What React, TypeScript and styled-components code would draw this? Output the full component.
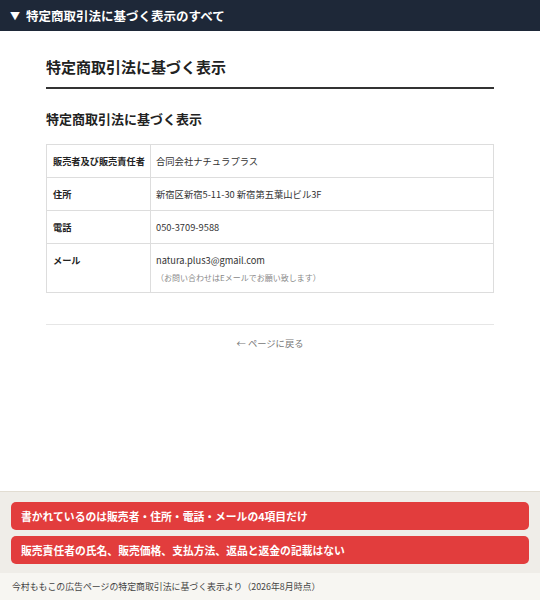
import React from "react";
import styled, { createGlobalStyle } from "styled-components";

const Global = createGlobalStyle`
  html, body { margin: 0; padding: 0; background: #ffffff; }
  body { font-family: "Noto Sans CJK JP", "Noto Sans", sans-serif; color: #222; }
  * { box-sizing: border-box; }
`;

const Page = styled.div`
  display: flex;
  flex-direction: column;
  height: 600px;
  width: 540px;
  overflow: hidden;
`;

const TopBar = styled.div`
  height: 31px;
  flex: none;
  background: #1e2838;
  color: #ffffff;
  display: flex;
  align-items: center;
  padding: 0 10px;
  font-size: 12.5px;
  font-weight: 700;
  gap: 6px;
`;

const Caret = styled.span`
  font-size: 10px;
`;

const Main = styled.div`
  flex: 1;
  background: #ffffff;
  padding: 24px 46px 0;
`;

const Title = styled.h1`
  margin: 0;
  font-size: 15px;
  font-weight: 700;
  line-height: 24px;
  padding-bottom: 8px;
  border-bottom: 2px solid #333;
`;

const SubTitle = styled.h2`
  margin: 19px 0 0;
  font-size: 13px;
  font-weight: 700;
  line-height: 22px;
`;

const Table = styled.div`
  margin-top: 14px;
  border: 1px solid #dddddd;
  display: grid;
  grid-template-columns: 104px 1fr;
`;

const Label = styled.div<{ $last?: boolean; $tall?: boolean }>`
  font-size: 9.2px;
  font-weight: 700;
  white-space: nowrap;
  padding: ${(p) => (p.$tall ? "9px 6px" : "0 6px")};
  display: flex;
  align-items: ${(p) => (p.$tall ? "flex-start" : "center")};
  height: ${(p) => (p.$tall ? "48px" : "33px")};
  border-right: 1px solid #dddddd;
  border-bottom: ${(p) => (p.$last ? "none" : "1px solid #dddddd")};
`;

const Value = styled.div<{ $last?: boolean; $tall?: boolean }>`
  font-size: 9.3px;
  color: #333;
  padding: ${(p) => (p.$tall ? "9px 5px" : "0 5px")};
  display: flex;
  flex-direction: column;
  justify-content: ${(p) => (p.$tall ? "flex-start" : "center")};
  height: ${(p) => (p.$tall ? "48px" : "33px")};
  border-bottom: ${(p) => (p.$last ? "none" : "1px solid #dddddd")};
`;

const Note = styled.span`
  font-size: 8px;
  color: #888;
  margin-top: 5px;
`;

const Divider = styled.div`
  margin-top: 31px;
  border-top: 1px solid #e6e6e6;
`;

const BackLink = styled.div`
  text-align: center;
  font-size: 9.3px;
  color: #777;
  margin-top: 11px;
`;

const Bottom = styled.div`
  flex: none;
  background: #efede8;
  border-top: 1px solid #e2ddd2;
  padding: 10px 11px 9px;
  display: flex;
  flex-direction: column;
  gap: 6px;
`;

const Alert = styled.div`
  background: #e23d3d;
  color: #ffffff;
  border-radius: 5px;
  height: 28px;
  display: flex;
  align-items: center;
  padding: 0 10px;
  font-size: 10.8px;
  font-weight: 700;
`;

const Footer = styled.div`
  flex: none;
  height: 27px;
  background: #f7f6f2;
  display: flex;
  align-items: center;
  padding: 0 12px;
  font-size: 8.9px;
  color: #444;
`;

const rows = [
  { label: "販売者及び販売責任者", value: "合同会社ナチュラプラス" },
  { label: "住所", value: "新宿区新宿5-11-30 新宿第五葉山ビル3F" },
  { label: "電話", value: "050-3709-9588" },
];

export default function App() {
  return (
    <Page>
      <Global />
      <TopBar>
        <Caret>▼</Caret>
        特定商取引法に基づく表示のすべて
      </TopBar>
      <Main>
        <Title>特定商取引法に基づく表示</Title>
        <SubTitle>特定商取引法に基づく表示</SubTitle>
        <Table>
          {rows.map((r) => (
            <React.Fragment key={r.label}>
              <Label>{r.label}</Label>
              <Value>{r.value}</Value>
            </React.Fragment>
          ))}
          <Label $last $tall>
            メール
          </Label>
          <Value $last $tall>
            natura.plus3@gmail.com
            <Note>（お問い合わせはEメールでお願い致します）</Note>
          </Value>
        </Table>
        <Divider />
        <BackLink>← ページに戻る</BackLink>
      </Main>
      <Bottom>
        <Alert>書かれているのは販売者・住所・電話・メールの4項目だけ</Alert>
        <Alert>販売責任者の氏名、販売価格、支払方法、返品と返金の記載はない</Alert>
      </Bottom>
      <Footer>今村ももこの広告ページの特定商取引法に基づく表示より（2026年8月時点）</Footer>
    </Page>
  );
}
